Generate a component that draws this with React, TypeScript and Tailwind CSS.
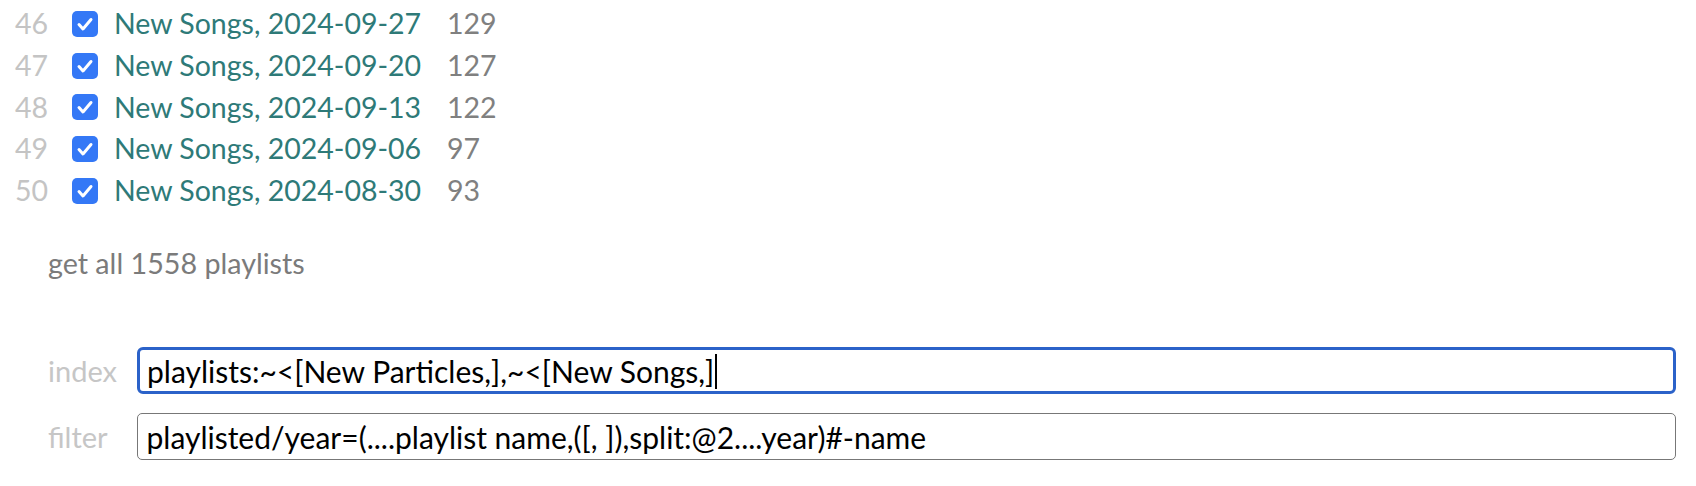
import React from "react";

const rows = [
  { n: 46, name: "New Songs, 2024-09-27", count: 129 },
  { n: 47, name: "New Songs, 2024-09-20", count: 127 },
  { n: 48, name: "New Songs, 2024-09-13", count: 122 },
  { n: 49, name: "New Songs, 2024-09-06", count: 97 },
  { n: 50, name: "New Songs, 2024-08-30", count: 93 },
];

function Check() {
  return (
    <span className="flex h-[26px] w-[26px] shrink-0 items-center justify-center rounded-[5px] bg-[#3478f6]">
      <svg width="22" height="22" viewBox="0 0 22 22" fill="none">
        <path d="M5 11.5l4 4.5L17 6.5" stroke="white" strokeWidth="3" strokeLinecap="round" strokeLinejoin="round" />
      </svg>
    </span>
  );
}

function Field({ label, value, focused }: { label: string; value: string; focused?: boolean }) {
  return (
    <div className="flex items-center">
      <span className="w-[89px] shrink-0 text-[29px] text-[#c6c6c6]">{label}</span>
      <div
        className={`flex h-[47px] flex-1 items-center pt-[2px] text-[30px] text-black ${
          focused ? "rounded-[6px] border-[3px] border-[#2b62c9] pl-[7px]" : "rounded-[5px] border-[1.5px] border-[#777777] pl-[8.5px]"
        }`}
      >
        <span className="whitespace-pre">{value}</span>
        {focused && <span className="ml-[1px] h-[35px] w-[1.5px] bg-black" />}
      </div>
    </div>
  );
}

export default function App() {
  return (
    <div className="h-[486px] w-[1696px] overflow-hidden bg-white font-['Lato',sans-serif]">
      {/* playlist rows */}
      <div className="mt-[3px] text-[28.5px]">
        {rows.map((r) => (
          <div key={r.n} className="flex h-[41.75px] items-center leading-[41.75px]">
            <span className="w-[48px] shrink-0 text-right text-[#c4c4c4]">{r.n}</span>
            <span className="ml-[24px]">
              <Check />
            </span>
            <span className="ml-[16px] w-[333px] shrink-0 text-[#2e7a78]">{r.name}</span>
            <span className="text-[#808080]">{r.count}</span>
          </div>
        ))}
      </div>

      <div className="mt-[33px] pl-[48px] text-[28.7px] leading-[36px] text-[#7b7b7b]">get all 1558 playlists</div>

      {/* query fields */}
      <div className="mt-[66px] flex flex-col gap-[19px] pl-[48px] pr-[20px]">
        <Field label="index" value="playlists:~<[New Particles,],~<[New Songs,]" focused />
        <Field label="filter" value="playlisted/year=(....playlist name,([, ]),split:@2....year)#-name" />
      </div>
    </div>
  );
}
